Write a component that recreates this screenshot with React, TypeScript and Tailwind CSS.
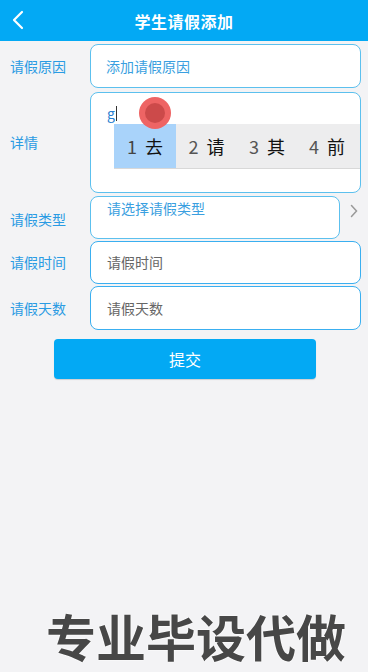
import React from "react";

const font = { fontFamily: '"Noto Sans CJK SC", "Noto Sans", sans-serif' };

function Label({ children, className = "" }: { children: React.ReactNode; className?: string }) {
  return (
    <div className={`w-[90px] shrink-0 pl-[10px] text-[14px] text-[#2a9be3] ${className}`}>{children}</div>
  );
}

export default function App() {
  return (
    <div className="relative w-[368px] h-[672px] overflow-hidden bg-[#f3f3f5]" style={font}>
      <div className="h-[41px] bg-[#03a9f4] flex items-center relative">
        <svg className="absolute left-[11px] top-[10px]" width="14" height="20" viewBox="0 0 14 20">
          <path d="M11 2 L3 10 L11 18" fill="none" stroke="#fff" strokeWidth="2.2" strokeLinecap="round" strokeLinejoin="round" />
        </svg>
        <div className="flex-1 text-center text-white font-bold text-[16px] tracking-[0.5px]">学生请假添加</div>
      </div>

      <div className="flex items-center mt-[3px] h-[44px]">
        <Label>请假原因</Label>
        <div className="w-[271px] h-full rounded-[8px] border border-[#5cc0ee] bg-white flex items-center pl-[15px] text-[14px] text-[#3a9fe0]">
          添加请假原因
        </div>
      </div>

      <div className="flex items-center mt-[4px] h-[101px]">
        <Label>详情</Label>
        <div className="relative w-[271px] h-full rounded-[8px] border border-[#5cc0ee] bg-white">
          <div className="absolute left-[16px] top-[10px] text-[14px] text-[#2a7fd0] underline leading-[20px]">g</div>
          <div className="absolute left-[25px] top-[13px] w-px h-[15px] bg-[#333]" />
        </div>
      </div>

      <div className="flex items-center mt-[3px] h-[43px]">
        <Label className="pt-[4px]">请假类型</Label>
        <div className="w-[250px] h-full rounded-[8px] border border-[#5cc0ee] bg-white pl-[16px] pt-[2px] text-[14px] leading-[18px] text-[#3a9fe0]">
          请选择请假类型
        </div>
        <svg className="ml-[10px] mb-[14px]" width="8" height="14" viewBox="0 0 8 14">
          <path d="M1.5 1.5 L6.5 7 L1.5 12.5" fill="none" stroke="#999" strokeWidth="1.5" strokeLinecap="round" />
        </svg>
      </div>

      <div className="flex items-center mt-[2px] h-[43px]">
        <Label>请假时间</Label>
        <div className="w-[271px] h-full rounded-[8px] border border-[#3aaff0] bg-white flex items-center pl-[16px] text-[14px] text-[#666]">
          请假时间
        </div>
      </div>

      <div className="flex items-center mt-[2px] h-[44px]">
        <Label>请假天数</Label>
        <div className="w-[271px] h-full rounded-[8px] border border-[#3aaff0] bg-white flex items-center pl-[16px] text-[14px] text-[#666]">
          请假天数
        </div>
      </div>

      <div className="ml-[54px] mt-[9px] w-[262px] h-[40px] rounded-[4px] bg-[#03a9f4] flex items-center justify-center text-white text-[16px] shadow-[0_1px_1px_rgba(0,0,0,0.15)]">
        提交
      </div>

      <div className="mt-[231px] pl-[46px]">
        <div
          className="text-[50px] font-bold text-[#474747] leading-none [text-shadow:0_0_2px_#fff,0_0_2px_#fff]"
          style={font}
        >
          专业毕设代做
        </div>
      </div>

      {/* IME candidate bar */}
      <div className="absolute left-[114px] top-[124px] w-[246px] h-[45px] bg-[#ededee] border-b border-[#d8d8d8] flex items-center text-[18px]">
        <div className="w-[62px] h-full bg-[#a9d3fa] flex items-center justify-center gap-[8px]">
          <span className="text-[#444]">1</span>
          <span className="text-[#111]">去</span>
        </div>
        <div className="w-[61px] flex items-center justify-center gap-[8px]">
          <span className="text-[#555]">2</span>
          <span className="text-[#111]">请</span>
        </div>
        <div className="w-[60px] flex items-center justify-center gap-[8px]">
          <span className="text-[#555]">3</span>
          <span className="text-[#111]">其</span>
        </div>
        <div className="w-[60px] flex items-center justify-center gap-[8px]">
          <span className="text-[#555]">4</span>
          <span className="text-[#111]">前</span>
        </div>
      </div>

      {/* touch indicator */}
      <div className="absolute left-[139px] top-[97px] w-[32px] h-[32px] rounded-full bg-[#ee6464] flex items-center justify-center">
        <div className="w-[20px] h-[20px] rounded-full bg-[#cc4a4a]" />
      </div>
    </div>
  );
}
